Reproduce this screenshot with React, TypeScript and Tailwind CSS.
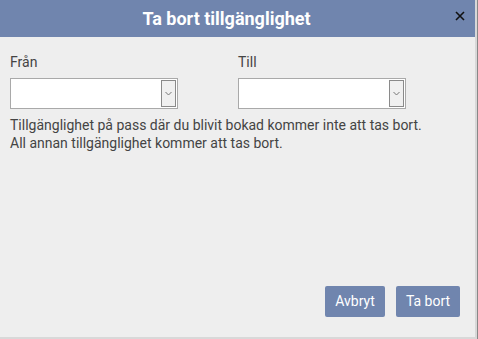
import React from "react";

const Select = () => (
  <div className="flex h-[31px] w-[168px] items-stretch border border-[#a9a9a9] bg-white">
    <div className="flex-1" />
    <div className="m-[1px] flex w-[15px] items-center justify-center border border-[#8a8a8a] bg-[#f0f0f0]">
      <svg width="7" height="5" viewBox="0 0 7 5">
        <path d="M0.5 1 L3.5 4 L6.5 1" fill="none" stroke="#777" strokeWidth="1" />
      </svg>
    </div>
  </div>
);

export default function App() {
  return (
    <div className="flex h-[339px] w-[478px] bg-[#d8d8d8] font-['Roboto',sans-serif]">
      <div className="flex h-[337px] w-[475px] flex-col bg-[#eeeeee]">
        <div className="relative flex h-[37px] items-center justify-center bg-[#7085ae] pr-[22px]">
          <span className="text-[18px] font-bold text-white">Ta bort tillgänglighet</span>
          <svg className="absolute right-[10px] top-[11px]" width="10" height="10" viewBox="0 0 10 10">
            <path d="M1 1 L9 9 M9 1 L1 9" stroke="#111" strokeWidth="1.6" />
          </svg>
        </div>
        <div className="flex flex-1 flex-col px-[10px] pt-[16px] pb-[20px] text-[14px] text-[#444]">
          <div className="flex gap-[60px]">
            <div className="flex flex-col gap-[7px]">
              <span className="leading-[18px]">Från</span>
              <Select />
            </div>
            <div className="flex flex-col gap-[7px]">
              <span className="leading-[18px]">Till</span>
              <Select />
            </div>
          </div>
          <p className="mt-[7px] leading-[18px]">
            Tillgänglighet på pass där du blivit bokad kommer inte att tas bort.
            <br />
            All annan tillgänglighet kommer att tas bort.
          </p>
          <div className="mt-auto flex justify-end gap-[11px] pr-[5px]">
            <button className="h-[31px] w-[60px] rounded-[2px] bg-[#7085ae] text-[14px] text-white">Avbryt</button>
            <button className="h-[31px] w-[64px] rounded-[2px] bg-[#7085ae] text-[14px] text-white">Ta bort</button>
          </div>
        </div>
      </div>
      <div className="w-[3px] border-r border-[#888]" />
    </div>
  );
}
